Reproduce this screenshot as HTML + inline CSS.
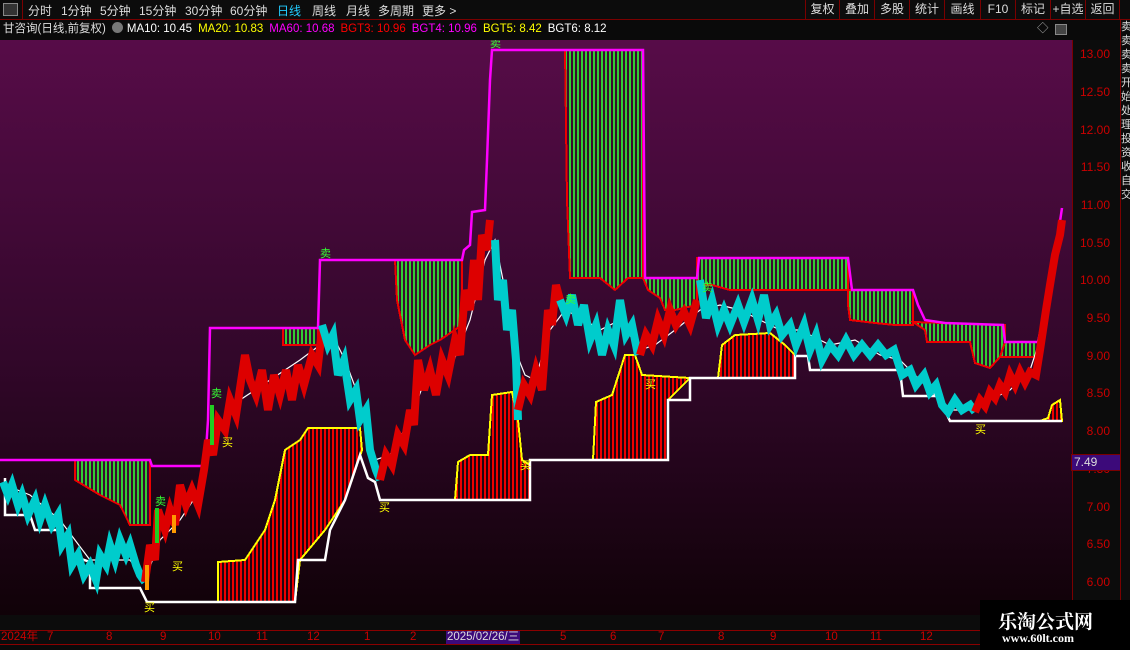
<!DOCTYPE html>
<html><head><meta charset="utf-8"><style>
*{margin:0;padding:0;box-sizing:border-box}
body{width:1130px;height:650px;background:#0a0a0a;overflow:hidden;position:relative;font-family:"Liberation Sans","Noto Sans CJK SC",sans-serif;}
.top{position:absolute;left:0;top:0;width:1130px;height:20px;background:#0c0c0c;border-bottom:1px solid #7a0000;color:#ddd;font-size:12px;}
.top span{position:absolute;top:2px}
.rb{position:absolute;top:0;height:20px;border-left:1px solid #7a0000;color:#ddd;font-size:12px;text-align:center;line-height:19px}
.leg{position:absolute;left:0;top:20px;width:1072px;height:20px;background:#0a0a0a;font-size:11.5px;white-space:nowrap;line-height:18px}
.leg span{margin-right:6px}
.ax{position:absolute;right:10px;color:#c00;font-size:12px}
</style></head><body>
<div class="top">
<div style="position:absolute;left:3px;top:3px;width:15px;height:13px;border:1px solid #888;background:#333"></div>
<div style="position:absolute;left:22px;top:0;width:1px;height:20px;background:#7a0000"></div>
<span style="left:28px">分时</span><span style="left:61px">1分钟</span><span style="left:100px">5分钟</span><span style="left:139px">15分钟</span><span style="left:185px">30分钟</span><span style="left:230px">60分钟</span><span style="left:277px;color:#2cf">日线</span><span style="left:312px">周线</span><span style="left:346px">月线</span><span style="left:378px">多周期</span><span style="left:422px">更多 &gt;</span>
</div>
<div class="rb" style="left:805px;width:34px">复权</div>
<div class="rb" style="left:839px;width:35px">叠加</div>
<div class="rb" style="left:874px;width:35px">多股</div>
<div class="rb" style="left:909px;width:35px">统计</div>
<div class="rb" style="left:944px;width:36px">画线</div>
<div class="rb" style="left:980px;width:35px">F10</div>
<div class="rb" style="left:1015px;width:35px">标记</div>
<div class="rb" style="left:1050px;width:35px">+自选</div>
<div class="rb" style="left:1085px;width:35px;border-right:1px solid #7a0000">返回</div>
<div class="leg"><span style="color:#ddd;margin-left:3px">甘咨询(日线,前复权)</span><span style="display:inline-block;width:11px;height:11px;border-radius:50%;background:#777;vertical-align:-1px;margin-right:4px"></span><span style="color:#fff">MA10: 10.45</span><span style="color:#ff0">MA20: 10.83</span><span style="color:#f0f">MA60: 10.68</span><span style="color:#f00">BGT3: 10.96</span><span style="color:#f0f">BGT4: 10.96</span><span style="color:#ff0">BGT5: 8.42</span><span style="color:#fff">BGT6: 8.12</span>
<span style="position:absolute;left:1037px;top:0;color:#aaa">◇</span><span style="position:absolute;left:1055px;top:4px;width:12px;height:11px;border:1px solid #888;background:#444"></span></div>
<svg style="position:absolute;left:0;top:40px" width="1072" height="575" viewBox="0 40 1072 575">
<defs>
<linearGradient id="bg" x1="0" y1="0" x2="0" y2="1"><stop offset="0" stop-color="#570c48"/><stop offset="0.55" stop-color="#32072a"/><stop offset="1" stop-color="#100208"/></linearGradient>
<pattern id="gh" width="4" height="10" patternUnits="userSpaceOnUse"><rect width="4" height="10" fill="#3a0a30"/><rect x="1" width="2" height="10" fill="#33cc33"/></pattern>
<pattern id="rh" width="4" height="10" patternUnits="userSpaceOnUse"><rect width="4" height="10" fill="#200510"/><rect x="0" width="2" height="10" fill="#e00"/></pattern>
</defs>
<rect x="0" y="40" width="1072" height="575" fill="url(#bg)"/>
<g fill="url(#gh)" stroke="#e00" stroke-width="2" shape-rendering="crispEdges">
<polygon points="75,460 150,460 150,525 130,525 120,505 100,495 75,480"/>
<polygon points="283,328 318,328 318,345 283,345"/>
<polygon points="395,260 462,260 462,325 440,340 430,345 415,355 405,340 397,300"/>
<polygon points="565,50 643,50 643,278 628,278 615,290 600,278 570,278 567,200"/>
<polygon points="643,278 697,278 697,305 675,310 665,310 660,298 648,290"/>
<polygon points="697,258 848,258 848,290 838,290 780,290 730,290 712,285 697,285"/>
<polygon points="848,290 913,290 913,325 895,325 875,323 850,320 848,305"/>
<polygon points="913,322 1005,325 1005,342 1000,357 990,368 975,363 970,342 927,342 925,330"/>
<polygon points="1005,342 1040,342 1040,357 1000,357"/>
</g>
<g fill="url(#rh)" stroke="#ff0" stroke-width="2" shape-rendering="crispEdges">
<polygon points="218,602 218,562 245,560 265,530 275,500 285,450 300,440 308,428 360,428 362,450 345,500 325,530 300,560 295,602"/>
<polygon points="455,500 458,462 470,455 488,455 492,395 512,392 518,420 522,460 530,465 530,500"/>
<polygon points="593,460 596,402 612,395 625,355 635,355 642,375 690,378 668,400 668,460"/>
<polygon points="718,378 722,345 735,335 770,333 785,345 795,355 795,378"/>
<polygon points="1040,421 1048,418 1052,405 1060,400 1062,421"/>
</g>
<polyline fill="none" stroke="#fff" stroke-width="2.5" points="5,478 5,515 30,515 35,530 62,530 70,555 90,562 90,588 140,588 147,602 295,602 298,560 325,560 330,530 345,500 360,455 368,478 375,482 380,500 530,500 530,460 593,460 668,460 668,400 690,400 690,378 795,378 795,356 808,356 810,370 900,370 903,396 938,396 950,421 1062,421"/>
<polyline fill="none" stroke="#f0f" stroke-width="2.5" points="0,460 150,460 152,466 205,466 208,420 210,328 318,328 320,260 462,260 464,250 470,245 472,212 485,210 487,160 490,80 492,50 643,50 645,278 697,278 699,258 848,258 852,290 913,290 918,305 925,320 945,323 1003,325 1005,342 1038,342 1045,310 1052,262 1058,235 1062,208"/>
<polyline fill="none" stroke="#fff" stroke-width="1.2" points="5,485 30,495 60,520 90,560 110,560 130,560 145,580 160,540 180,520 200,490 215,430 240,400 270,380 300,360 320,345 335,340 345,360 360,400 375,460 390,455 410,420 425,380 450,370 470,320 485,260 495,240 505,290 515,350 525,375 535,380 550,330 565,310 585,320 600,330 620,320 640,350 655,345 675,330 700,310 720,305 740,310 760,320 780,330 800,330 830,345 855,340 880,355 900,360 915,375 935,395 950,410 975,410 990,400 1010,390 1030,370 1040,340 1050,290 1060,230"/>
<g fill="none" stroke-width="8" stroke-linejoin="miter">
<polyline stroke="#0cc" points="3,482 8,495 12,485 18,505 22,495 28,515 35,500 40,520 45,505 52,525 58,515 62,545 68,535 72,565 78,555 84,575 90,565 96,580 100,555 106,565 110,545 115,560 120,540 126,555 130,545 136,565 140,575 145,582"/>
<polyline stroke="#d00" points="145,582 150,545 155,560 158,510 165,530 170,510 175,525 180,485 186,505 192,490 198,505 204,470 208,440 213,455 218,420 225,430 230,400 236,415 245,355 250,380 256,395 262,370 268,410 274,375 280,395 286,370 292,400 298,365 304,385 312,355 318,365 322,330"/>
<polyline stroke="#0cc" points="322,325 328,345 333,335 338,375 344,360 350,400 356,390 360,420 366,410 370,450 376,470 380,480"/>
<polyline stroke="#d00" points="380,480 386,455 392,465 398,435 404,445 410,410 414,425 418,360 424,390 430,370 436,395 442,360 448,375 455,340 460,355 465,290 470,310 474,260 478,300 482,235 487,250 490,220"/>
<polyline stroke="#0cc" points="495,240 498,300 503,280 507,330 512,310 516,360 518,420"/>
<polyline stroke="#d00" points="518,410 524,385 530,395 536,370 542,390 548,310 552,325 556,285 560,300"/>
<polyline stroke="#0cc" points="560,300 566,315 572,295 578,325 584,305 590,340 596,325 602,355 608,330 614,345 620,300 626,335 632,325 638,355"/>
<polyline stroke="#d00" points="640,355 646,335 652,345 658,320 664,335 670,310 676,325 684,312 690,325 697,300"/>
<polyline stroke="#0cc" points="700,280 706,318 712,300 718,325 724,310 730,325 738,305 744,322 752,300 758,320 764,295 770,325 776,315 782,335 790,325 796,345 804,325 810,350 816,335 822,360 830,345 838,355 846,340 854,355 862,345 870,355 878,345 886,355 894,350 902,375 910,370 916,385 924,375 930,392 936,385 942,405 948,412 955,400 962,410 970,405 975,412"/>
<polyline stroke="#d00" points="975,412 980,400 985,406 990,392 995,398 1000,385 1005,392 1010,375 1015,385 1020,372 1025,382 1030,372 1036,375 1040,350 1046,310 1050,285 1055,255 1060,235 1062,220"/>
</g>
<rect x="210" y="405" width="4" height="40" fill="#2c2"/><rect x="155" y="508" width="4" height="35" fill="#2c2"/><rect x="145" y="565" width="4" height="25" fill="#f90"/><rect x="172" y="515" width="4" height="18" fill="#f90"/>
<g font-size="11" font-family="Noto Sans CJK SC,sans-serif">
<g fill="#3f3"><text x="320" y="257">卖</text><text x="211" y="397">卖</text><text x="155" y="505">卖</text><text x="565" y="303">卖</text><text x="702" y="291">卖</text><text x="490" y="47">卖</text></g>
<g fill="#ff0"><text x="144" y="611">买</text><text x="172" y="570">买</text><text x="222" y="446">买</text><text x="379" y="511">买</text><text x="520" y="469">买</text><text x="645" y="388">买</text><text x="975" y="433">买</text></g>
</g>
</svg>
<div style="position:absolute;left:1072px;top:40px;width:48px;height:590px;background:#0c0c0c;border-left:1px solid #7a0000"></div>
<div style="position:absolute;left:1120px;top:20px;width:10px;height:610px;background:#0c0c0c;border-left:1px solid #7a0000;color:#ddd;font-size:11px;overflow:hidden;line-height:14px">卖<br>卖<br>卖<br>卖<br>开<br>始<br>处<br>理<br>投<br>资<br>收<br>自<br>交</div>
<div style="position:absolute;left:1072px;top:40px;width:48px;height:590px;font-size:12px;">
<div class="ax" style="top:7px">13.00</div><div class="ax" style="top:45px">12.50</div><div class="ax" style="top:83px">12.00</div><div class="ax" style="top:120px">11.50</div><div class="ax" style="top:158px">11.00</div><div class="ax" style="top:196px">10.50</div><div class="ax" style="top:233px">10.00</div><div class="ax" style="top:271px">9.50</div><div class="ax" style="top:309px">9.00</div><div class="ax" style="top:346px">8.50</div><div class="ax" style="top:384px">8.00</div><div class="ax" style="top:422px">7.50</div><div class="ax" style="top:460px">7.00</div><div class="ax" style="top:497px">6.50</div><div class="ax" style="top:535px">6.00</div>
</div>
<div style="position:absolute;left:1071px;top:454px;width:50px;height:17px;background:#3c0a7a;border:1px solid #7a0000;color:#ddd;font-size:12px;padding-left:2px;line-height:15px">7.49</div>
<div style="position:absolute;left:0;top:615px;width:980px;height:15px;background:#0c0c0c"></div>
<div style="position:absolute;left:0;top:630px;width:980px;height:15px;background:#0c0c0c;border-top:1px solid #8a0000;border-bottom:1px solid #8a0000;color:#c00;font-size:11.5px;line-height:13px">
<span style="position:absolute;left:1px">2024年</span><span style="position:absolute;left:47px">7</span><span style="position:absolute;left:106px">8</span><span style="position:absolute;left:160px">9</span><span style="position:absolute;left:208px">10</span><span style="position:absolute;left:256px">11</span><span style="position:absolute;left:307px">12</span><span style="position:absolute;left:364px">1</span><span style="position:absolute;left:410px">2</span><span style="position:absolute;left:446px;background:#3c0a7a;color:#ddd;padding:0 1px">2025/02/26/三</span><span style="position:absolute;left:560px">5</span><span style="position:absolute;left:610px">6</span><span style="position:absolute;left:658px">7</span><span style="position:absolute;left:718px">8</span><span style="position:absolute;left:770px">9</span><span style="position:absolute;left:825px">10</span><span style="position:absolute;left:870px">11</span><span style="position:absolute;left:920px">12</span>
</div>
<div style="position:absolute;left:980px;top:600px;width:150px;height:50px;background:#000"></div>
<div style="position:absolute;left:998px;top:607px;color:#fff;font-size:19px;font-weight:bold;font-family:'Noto Serif CJK SC',serif">乐淘公式网</div>
<div style="position:absolute;left:1002px;top:631px;color:#fff;font-size:12px;font-weight:bold;font-family:'Liberation Serif',serif">www.60lt.com</div>
</body></html>
